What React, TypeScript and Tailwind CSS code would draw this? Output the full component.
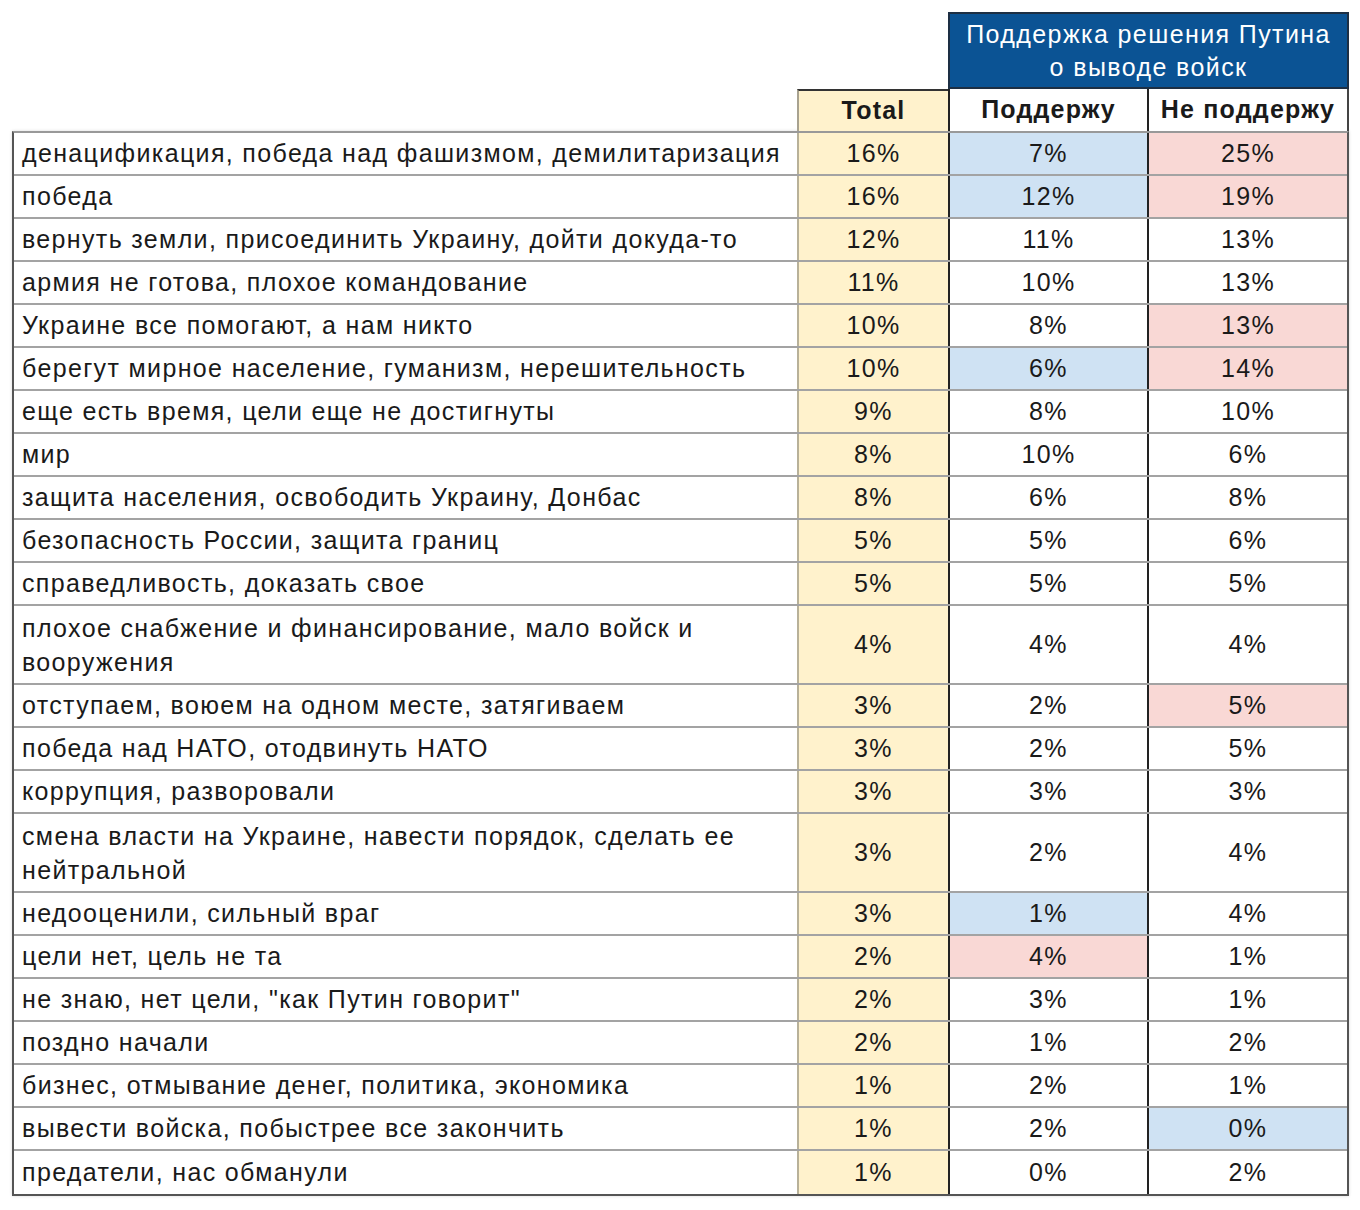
import React from "react";

type Hl = "b" | "r" | "";
type Row = { label: React.ReactNode; total: string; yes: string; no: string; yh?: Hl; nh?: Hl; tall?: boolean };

const rows: Row[] = [
  { label: "денацификация, победа над фашизмом, демилитаризация", total: "16%", yes: "7%", no: "25%", yh: "b", nh: "r" },
  { label: "победа", total: "16%", yes: "12%", no: "19%", yh: "b", nh: "r" },
  { label: "вернуть земли, присоединить Украину, дойти докуда-то", total: "12%", yes: "11%", no: "13%" },
  { label: "армия не готова, плохое командование", total: "11%", yes: "10%", no: "13%" },
  { label: "Украине все помогают, а нам никто", total: "10%", yes: "8%", no: "13%", nh: "r" },
  { label: "берегут мирное население, гуманизм, нерешительность", total: "10%", yes: "6%", no: "14%", yh: "b", nh: "r" },
  { label: "еще есть время, цели еще не достигнуты", total: "9%", yes: "8%", no: "10%" },
  { label: "мир", total: "8%", yes: "10%", no: "6%" },
  { label: "защита населения, освободить Украину, Донбас", total: "8%", yes: "6%", no: "8%" },
  { label: "безопасность России, защита границ", total: "5%", yes: "5%", no: "6%" },
  { label: "справедливость, доказать свое", total: "5%", yes: "5%", no: "5%" },
  {
    label: (
      <>
        плохое снабжение и финансирование, мало войск и
        <br />
        вооружения
      </>
    ),
    total: "4%",
    yes: "4%",
    no: "4%",
    tall: true,
  },
  { label: "отступаем, воюем на одном месте, затягиваем", total: "3%", yes: "2%", no: "5%", nh: "r" },
  { label: "победа над НАТО, отодвинуть НАТО", total: "3%", yes: "2%", no: "5%" },
  { label: "коррупция, разворовали", total: "3%", yes: "3%", no: "3%" },
  {
    label: (
      <>
        смена власти на Украине, навести порядок, сделать ее
        <br />
        нейтральной
      </>
    ),
    total: "3%",
    yes: "2%",
    no: "4%",
    tall: true,
  },
  { label: "недооценили, сильный враг", total: "3%", yes: "1%", no: "4%", yh: "b" },
  { label: "цели нет, цель не та", total: "2%", yes: "4%", no: "1%", yh: "r" },
  { label: "не знаю, нет цели, \"как Путин говорит\"", total: "2%", yes: "3%", no: "1%" },
  { label: "поздно начали", total: "2%", yes: "1%", no: "2%" },
  { label: "бизнес, отмывание денег, политика, экономика", total: "1%", yes: "2%", no: "1%" },
  { label: "вывести войска, побыстрее все закончить", total: "1%", yes: "2%", no: "0%", nh: "b" },
  { label: "предатели, нас обманули", total: "1%", yes: "0%", no: "2%" },
];

const bg = (h?: Hl) => (h === "b" ? "bg-[#cfe2f3]" : h === "r" ? "bg-[#f9d8d5]" : "bg-white");

export default function App() {
  return (
    <div
      className="w-[1360px] h-[1210px] bg-white text-[#1a1a1a] pl-[12px] pt-[12px]"
      style={{ fontFamily: '"Liberation Sans", Arial, sans-serif' }}
    >
      <div className="w-[1337px] text-[25px] tracking-[1.35px]">
        {/* top header */}
        <div className="grid grid-cols-[785px_151px_401px] h-[77px]">
          <div />
          <div />
          <div className="bg-[#0b5394] border-2 border-[#1d2f44] text-white text-center leading-[33px] pt-[4px] tracking-[1.4px]">
            Поддержка решения Путина
            <br />
            о выводе войск
          </div>
        </div>
        {/* column header */}
        <div className="grid grid-cols-[785px_151px_199px_202px] h-[42px] font-bold tracking-[1.2px]">
          <div />
          <div className="bg-[#fff2cc] border-l-2 border-t-2 border-l-[#a8a290] border-t-[#333] flex items-center justify-center">
            Total
          </div>
          <div className="bg-white border-l-2 border-[#222] flex items-center justify-center">Поддержу</div>
          <div className="bg-white border-l-2 border-r-2 border-l-[#222] border-r-[#444] flex items-center justify-center">
            Не поддержу
          </div>
        </div>
        {/* body */}
        <div className="border-2 border-[#555] border-t-[#999] shadow-[0_0_3px_rgba(0,0,0,0.15)]">
          {rows.map((r, i) => (
            <div
              key={i}
              className={`grid grid-cols-[783px_151px_199px_200px] ${r.tall ? "h-[79px]" : "h-[43px]"} ${
                i < rows.length - 1 ? "border-b-2 border-[#a3a3a3]" : ""
              }`}
            >
              <div className={`flex items-center pl-[8px] whitespace-nowrap ${r.tall ? "leading-[34px]" : ""}`}>
                <span>{r.label}</span>
              </div>
              <div className="bg-[#fff2cc] border-l-2 border-[#b8b199] flex items-center justify-center">{r.total}</div>
              <div className={`${bg(r.yh)} border-l-2 border-[#222] flex items-center justify-center`}>{r.yes}</div>
              <div className={`${bg(r.nh)} border-l-2 border-[#222] flex items-center justify-center`}>{r.no}</div>
            </div>
          ))}
        </div>
      </div>
    </div>
  );
}
